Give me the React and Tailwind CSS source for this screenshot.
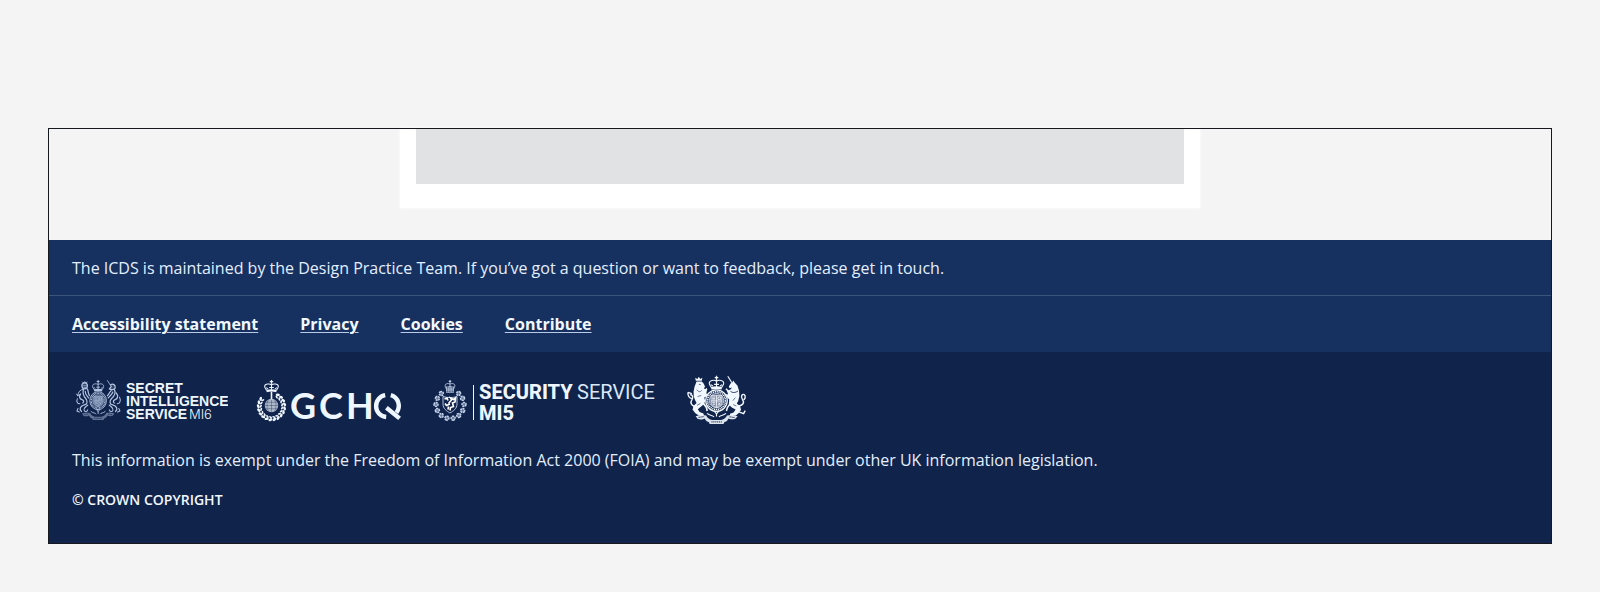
import React from 'react';

const links = ['Accessibility statement', 'Privacy', 'Cookies', 'Contribute'];

function Crown() {
  return (
    <g fill="none" stroke="currentColor" strokeWidth="1.1">
      <path d="M0 -13.2v4.2M-1.8 -11.4h3.6" strokeWidth="1.3" />
      <circle cx="0" cy="-8.4" r="0.9" fill="currentColor" stroke="none" />
      <path d="M0 -7.6C-2 -9.4 -7.4 -9 -7.2 -5.6C-7 -4 -6 -3.2 -5.2 -1.6" />
      <path d="M0 -7.6C2 -9.4 7.4 -9 7.2 -5.6C7 -4 6 -3.2 5.2 -1.6" />
      <path d="M0 -7.6V-2M-2.4 -4.6h4.8" />
      <path d="M-5.6 -4.4l2 1.4M5.6 -4.4l-2 1.4" />
      <path d="M-5.6 -2Q0 -3.6 5.6 -2L5 0.6Q0 -0.6 -5 0.6Z" fill="currentColor" stroke="none" />
    </g>
  );
}

function SolidSupporters() {
  return (
    <g>
      {/* lion */}
      <path fill="currentColor" d="M9 8L9.6 6.4L14.8 6.4L16.8 8.8L18 11.4L17 13.4L20 15.2L19.4 18L20.2 20.6L17.2 22.6L18.2 25.8L17.2 29L13.8 31.8L10.8 34.2L12.6 37L16.4 38.6L17 40.6L11.8 40.6L8.4 38.2L5.6 34.8L6.4 31L9.6 28L8 25L6.8 21.6L6.6 16.4L7.6 11.6Z" />
      <path d="M8.8 5.8L8.2 2.8L10.4 4L11.8 1.8L13.2 4L15.4 2.8L14.8 5.8Z" fill="currentColor" />
      <path d="M7.8 31.4C3.6 30.4 3.2 27 5 24.6C6.4 22.2 5.6 19.4 3.2 19.8M1 17.4C0.4 20 2 23 4.6 23.6M1 17.4L4.8 18.6" fill="none" stroke="currentColor" strokeWidth="1.4" />
      <path d="M16.6 16.4L20 13.8M17 21.4L20.8 19.6M16.4 28.4L19.4 32.4L20.2 36" fill="none" stroke="currentColor" strokeWidth="1.7" />
      {/* unicorn */}
      <path fill="currentColor" d="M41.8 11.6L43.6 8.4L45.4 7.2L46.4 5.4L47.6 7.6L50.4 10.4L52 15.6L52.4 21L51.2 26L49.8 28.4L53.2 31.6L54 35L51.2 38.4L48.8 40.6L43 40.6L43 38.8L46.6 37.4L48.6 34.6L44.8 32.4L41.8 29.4L42.2 24.4L39.4 21.4L41 19L40 16L43.8 14.2L45 12.6L42.6 13.2Z" />
      <path d="M44.8 7.6L40.8 1.2" stroke="currentColor" strokeWidth="1.1" />
      <path d="M51.4 31C56.4 30.6 57.6 27.4 55.4 24.4C53.6 21.6 54.8 18.6 57.2 19.6C59.4 21.6 57.6 24.2 56.6 24.8M50.4 36.4L56.6 38.6L58.2 35.6" fill="none" stroke="currentColor" strokeWidth="1.4" />
      <path d="M42 17L39 13.8M42.4 21L38.6 19.6M43 29L40.4 32.6L39.4 36" fill="none" stroke="currentColor" strokeWidth="1.5" />
      <path d="M43.4 16.2C45 18 48.6 18 51 16" stroke="#10234b" strokeWidth="0.8" fill="none" />
      <path d="M11.8 9.4L13.8 9.6M9.8 14.6C11 17 13.6 17.4 14.6 15.4M10.6 21.6L14.2 20.4M10 30.4L13.4 28.4M48.4 22.6L45.8 25.6M49.4 31L46.2 29.6" stroke="#10234b" strokeWidth="0.6" fill="none" />
    </g>
  );
}

function EngravedSupporters() {
  return (
    <g fill="none" stroke="currentColor" strokeWidth="1.6" strokeLinecap="round">
      {/* lion */}
      <circle cx="12" cy="7.8" r="3.6" fill="currentColor" fillOpacity="0.25" />
      <path d="M9.4 3.2l1.2 1.4l1.6 -2l1.4 2l1.6 -1.2" strokeWidth="1.1" />
      <path d="M10.6 7.4h1M13.4 7.4h0.6M11.4 9.6h2" strokeWidth="0.8" />
      <path d="M9.6 12C6.6 12.4 3.4 15 3 19.6M3 19.6l-1.600 -2M3 19.6l2.4 -1.2" strokeWidth="1.2" />
      <path d="M10.4 12.4C9 17 10.6 20 13.4 23C16.4 26.4 15.4 30 11.6 30.8C6.4 32 4.4 35.6 8 38.6" />
      <path d="M15.4 11.6C17.4 14 16 17 18.2 19.6M12.8 14.4C12.4 18 15.6 20 17.2 22.4M6.8 17.6C4.2 20.6 5.4 23.6 8.6 24.4C10.8 25 11.6 27 9.6 28.4" />
      <path d="M2.6 23.4C0.6 27 3 29.6 5.8 29.4M16.2 30.8C13.2 33.2 10.4 34.4 11.4 37.4C12.6 39.6 15.6 38.6 16 36.6M3.4 35l-1.400 3l3 1.400" strokeWidth="1.3" />
      {/* unicorn */}
      <path d="M46 7.8L41.6 1.4" strokeWidth="1" />
      <path d="M45.600 6.400C49 4.400 52.400 6.800 51.600 10.400C50.600 13 46.600 12.600 44.200 11.400L46.600 8.400" fill="currentColor" fillOpacity="0.2" />
      <path d="M50.800 12.600C53 17 50.600 20 47 23C43.600 26.400 44.600 30 48.400 30.800C53.600 32 55.600 35.600 52 38.600" />
      <path d="M46.400 13.600C43.400 15.600 44.400 17.800 41.600 19.600M48.600 15.200C47.600 18.600 44.200 20 42.600 22.400M53 16.400C56.200 19.600 55 23.400 51.600 24.400C49.400 25 48.400 27 50.400 28.400" />
      <path d="M57.400 21.400C59.600 26 57.400 29.600 54.200 29.400M43.800 30.800C46.800 33.200 49.600 34.400 48.600 37.400C47.400 39.600 44.400 38.600 44 36.600M56.400 35l1.400 3l-3 1.400" strokeWidth="1.3" />
    </g>
  );
}

function RoyalArms({ engraved }) {
  return (
    <g>
      <g transform="translate(29.5 14)"><Crown /></g>
      {engraved ? <EngravedSupporters /> : <SolidSupporters />}
      {/* garter and quartered shield */}
      <circle cx="29.5" cy="25.6" r="10.8" fill="#10234b" stroke="currentColor" strokeWidth="1.2" />
      <circle cx="29.5" cy="25.6" r="8.9" fill="none" stroke="currentColor" strokeWidth="1.7" strokeDasharray="1.2 0.7" />
      <circle cx="29.5" cy="25.6" r="7.2" fill="currentColor" fillOpacity="0.3" stroke="currentColor" strokeWidth="0.7" />
      <path d="M24 20.4H35V27.4C35 30.2 32 31.6 29.5 32.6C27 31.6 24 30.2 24 27.4Z" fill="currentColor" fillOpacity="0.3" stroke="currentColor" strokeWidth="0.7" />
      <path d="M29.5 20.4V32.6M24 26H35M25.2 22h3M25.2 23.6h3M25.2 25h3M31 22h2.8v2.6H31zM31.2 27.6l2.2 2.4M33.4 27.4L31 30.4M25.4 27.6h2.8M25.8 29.2h2.6" stroke="currentColor" strokeWidth="0.8" fill="none" />
      <path d="M27.4 36.4l2.1 2.4l2.1 -2.4M29.5 38.6v3" stroke="currentColor" strokeWidth="1.2" fill="none" />
      {/* motto scroll */}
      <path d="M8.6 41.2C13 39.6 17 39.6 19.2 40.6C20.4 43 22.6 44.8 25.2 45H34C36.6 44.8 38.8 43 40 40.6C42.4 39.6 46.6 39.6 50.6 41.2L48.4 43.8C46.4 44.6 43.4 44.6 41.6 43.4C40.4 45.8 38.8 46.8 37.2 47.2L36.6 49H22.6L22 47.2C20.4 46.8 18.8 45.8 17.6 43.4C15.8 44.8 12.8 44.6 10.8 44Z" fill="currentColor" fillOpacity={engraved ? 0.5 : 0.9} />
      <path d="M11.6 42.4l5 -0.8M42.6 41.8l5 0.8M24.4 46.9h10.4" stroke="#10234b" strokeWidth="1" strokeDasharray="1.2 0.7" />
      <path d="M20 38.4C23 41 26 40 27 42M39 38.4C36 41 33 40 32 42" fill="none" stroke="currentColor" strokeWidth="1.1" />
    </g>
  );
}

function SisLogo() {
  return (
    <svg width="156" height="48" viewBox="0 0 156 48" role="img" className="text-[#eef6ff]">
      <g transform="translate(3.4 3.4) scale(0.77 0.83)" className="text-[#b3c4e2]"><RoyalArms engraved /></g>
      <g fill="currentColor" fontFamily="'Liberation Sans', Arial, sans-serif" fontSize="14" fontWeight="700">
        <text x="54" y="17">SECRET</text>
        <text x="54" y="30">INTELLIGENCE</text>
        <text x="54" y="43">SERVICE</text>
        <text x="117" y="43" fontFamily="Inter, sans-serif" fontWeight="300" fontSize="13">MI6</text>
      </g>
    </svg>
  );
}

const wreath = Array.from({ length: 17 }, (_, i) => -58 + 17.3 * i);

function GchqLogo() {
  return (
    <svg width="152" height="48" viewBox="0 0 152 48" role="img" className="text-[#eef6ff]">
      <g transform="translate(19.5 15.6) scale(0.95 0.88)"><Crown /></g>
      <g transform="translate(19.5 30.5)">
        {wreath.map((a) => (
          <g key={a} transform={`rotate(${a}) translate(11.8 0)`} fill="currentColor">
            <ellipse cx="1.6" cy="0" rx="1.3" ry="2.1" transform="rotate(-28)" />
            <ellipse cx="-1.2" cy="0" rx="0.9" ry="1.7" transform="rotate(28)" />
          </g>
        ))}
        <circle cy="-1" r="6.7" fill="currentColor" fillOpacity="0.7" />
        <path d="M0 -7.6V5.6M-6.6 -1H6.6M-5.6 -4.2H5.6M-5.6 2.2H5.6M-3 -7C-5 -3 -5 1 -3 5M3 -7C5 -3 5 1 3 5" stroke="#10234b" strokeOpacity="0.55" strokeWidth="0.6" fill="none" />
        <path d="M0 -15V-7" stroke="currentColor" strokeWidth="1.6" />
      </g>
      <g fill="currentColor" fontFamily="Lato, sans-serif" fontSize="36" fontWeight="700">
        <text x="38" y="43">G</text>
        <text x="67" y="43">C</text>
        <text x="94" y="43">H</text>
      </g>
      {/* the Q is drawn as a broken ring with a detached tail */}
      <g fill="none" stroke="currentColor" strokeWidth="4.4">
        <path d="M133.2 19.2A11 11 0 0 0 134.2 41" />
        <path d="M138.8 19.2A11 11 0 0 1 144.4 36.6" />
        <path d="M134.4 31.8L147.6 42.4" />
      </g>
    </svg>
  );
}

const flowers = Array.from({ length: 12 }, (_, i) => -52 + 25.8 * i);

function Mi5Logo() {
  return (
    <svg width="232" height="48" viewBox="0 0 232 48" role="img" className="text-[#eef6ff]">
      <g className="text-[#c4d3ec]">
        <g transform="translate(22 14.5) scale(0.68 0.8)"><Crown /></g>
        <path d="M18.2 10.5h7.6v6.5h-7.6z" fill="currentColor" fillOpacity="0.75" />
        <path d="M19.8 11v5.5M22 11v5.5M24.2 11v5.5" stroke="#10234b" strokeWidth="0.6" />
        <g transform="translate(22 28.5)">
          {flowers.map((a) => (
            <g key={a} transform={`rotate(${a}) translate(14 0)`}>
              <circle r="2" fill="currentColor" fillOpacity="0.5" stroke="currentColor" strokeWidth="1.5" strokeDasharray="1.9 0.6" />
            </g>
          ))}
        </g>
        <path d="M15 20.5C19 22 25 22 29 20.5V28C29 32.5 25.5 35 22 37C18.5 35 15 32.5 15 28Z" fill="none" stroke="currentColor" strokeWidth="0.9" />
        <path d="M16.5 23l2.5 -1l1 2.500M20.500 27.500l3 -3.500l-1 -2l3 1.500l2 -1.500l-.5 4l-2.500 1l1 3.500l-3 1l-.5 3M22 28l-3.500 1.500l-1.500 -2M20.500 30.500l-.5 3" fill="none" stroke="#fff" strokeWidth="1.6" />
      </g>
      <path d="M45.5 9V44" stroke="currentColor" strokeWidth="1" />
      <g fill="currentColor" fontFamily="Roboto, sans-serif" fontSize="20">
        <text x="51" y="23" fontWeight="800">SECURITY</text>
        <text x="149" y="23" fontWeight="400" className="text-[#dbe8fa]">SERVICE</text>
        <text x="51" y="44" fontWeight="800">MI5</text>
      </g>
    </svg>
  );
}

function GovernmentCrest() {
  return (
    <svg width="64" height="50" viewBox="0 0 64 50" role="img" className="-my-px text-[#f2f8ff]">
      <g transform="translate(3 0)"><RoyalArms /></g>
    </svg>
  );
}

export default function App() {
  return (
    <div className="min-h-screen bg-[#f4f4f4] px-12 pt-32 pb-12 font-['Open_Sans','Noto_Sans',sans-serif] text-base">
      <div className="outline-1 -outline-offset-1 outline-[#15181d]">
        <main className="pb-8">
          <div className="mx-auto max-w-[800px] bg-white px-4 pb-6 shadow-[0_0_3px_#ffffff]">
            <div className="h-14 bg-[#e1e2e4]" />
          </div>
        </main>
        <footer className="text-[#e3efff]">
          <div className="bg-[#16305f]">
            <p className="border-b border-[#3c537c] px-6 pt-4 pb-[15px]">
              The ICDS is maintained by the Design Practice Team. If you’ve got a question or want to feedback, please get in touch.
            </p>
            <nav className="px-6 py-4">
              <ul className="flex flex-wrap gap-[42px]">
                {links.map((label) => (
                  <li key={label}>
                    <a href="#" className="font-bold text-[#f2f8ff] underline decoration-[#b9cbe6] decoration-1 underline-offset-2">{label}</a>
                  </li>
                ))}
              </ul>
            </nav>
          </div>
          <div className="bg-[#10234b] px-6 pt-6 pb-8">
            <div className="flex flex-wrap items-center gap-6">
              <SisLogo />
              <GchqLogo />
              <Mi5Logo />
              <GovernmentCrest />
            </div>
            <p className="mt-6">
              This information is exempt under the Freedom of Information Act 2000 (FOIA) and may be exempt under other UK information legislation.
            </p>
            <p className="mt-4 text-sm leading-6 font-semibold text-[#f2f8ff]">© CROWN COPYRIGHT</p>
          </div>
        </footer>
      </div>
    </div>
  );
}
